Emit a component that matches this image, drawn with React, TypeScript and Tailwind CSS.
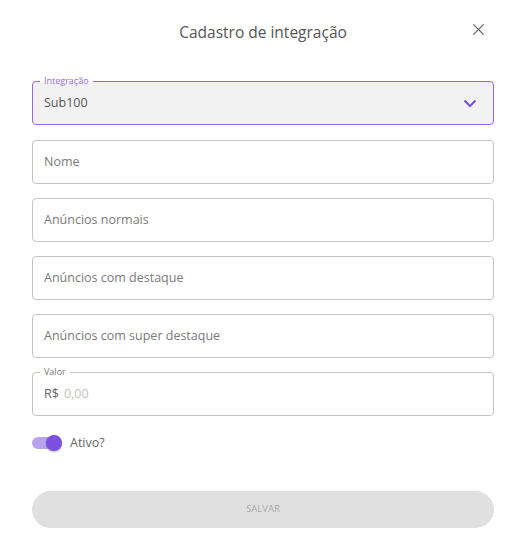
const font = { fontFamily: "'Open Sans', 'Noto Sans', sans-serif" };

function OutlinedField({ label, children, focused = false }: { label: string; children: React.ReactNode; focused?: boolean }) {
  return (
    <div
      className={`relative h-[44px] rounded-[4px] border px-[11px] flex items-center ${
        focused ? "border-[#9466ee] bg-[#f2f2f2]" : "border-[#c4c4c4] bg-white"
      }`}
    >
      <span
        className={`absolute left-[7px] top-[-6px] px-[4px] text-[9px] leading-[10px] ${
          focused ? "text-[#9466ee] bg-[linear-gradient(to_bottom,#fff_70%,#f2f2f2_70%)]" : "text-[#777] bg-white"
        }`}
      >
        {label}
      </span>
      {children}
    </div>
  );
}

function TextField({ placeholder }: { placeholder: string }) {
  return (
    <div className="h-[44px] rounded-[4px] border border-[#c4c4c4] px-[11px] flex items-center">
      <span className="text-[12.5px] text-[#7a7a7a]">{placeholder}</span>
    </div>
  );
}

export default function App() {
  return (
    <div className="w-[532px] h-[552px] bg-white text-[#555]" style={font}>
      <div className="relative flex justify-center pl-[32px] pr-[38px] pt-[21px] h-[81px]">
        <h2 className="text-[15.5px] leading-[22px] text-[#555]">Cadastro de integração</h2>
        <button className="absolute right-[47px] top-[23px] text-[#666]">
          <svg width="13" height="13" viewBox="0 0 14 14" fill="none" stroke="currentColor" strokeWidth="1.4">
            <path d="M1.5 1.5l11 11M12.5 1.5l-11 11" />
          </svg>
        </button>
      </div>

      <div className="pl-[32px] pr-[38px] flex flex-col">
        <OutlinedField label="Integração" focused>
          <div className="flex-1 flex items-center justify-between">
            <span className="text-[12.5px] text-[#555]">Sub100</span>
            <svg width="14" height="9" viewBox="0 0 14 9" fill="none" stroke="#7c4fdc" strokeWidth="2" className="mr-[5px]">
              <path d="M1.5 1.5l5.5 5.5 5.5-5.5" />
            </svg>
          </div>
        </OutlinedField>

        <div className="flex flex-col gap-[14px] mt-[15px]">
          <TextField placeholder="Nome" />
          <TextField placeholder="Anúncios normais" />
          <TextField placeholder="Anúncios com destaque" />
          <TextField placeholder="Anúncios com super destaque" />
          <OutlinedField label="Valor">
            <div className="flex items-center gap-[5px] text-[12.5px]">
              <span className="text-[#666]">R$</span>
              <span className="text-[#c2c2c2]">0,00</span>
            </div>
          </OutlinedField>
        </div>

        <div className="flex items-center gap-[8px] mt-[18px]">
          <div className="relative w-[30px] h-[16px] flex items-center">
            <div className="w-[28px] h-[12px] rounded-full bg-[#b9a3ee]" />
            <div className="absolute right-0 top-0 w-[16px] h-[16px] rounded-full bg-[#7c4fdc] shadow-[0_1px_2px_rgba(0,0,0,0.3)]" />
          </div>
          <span className="text-[12.5px] text-[#666]">Ativo?</span>
        </div>

        <button className="mt-[38px] h-[37px] w-full rounded-full bg-[#e0e0e0] text-[9.5px] text-[#aaa]">
          SALVAR
        </button>
      </div>
    </div>
  );
}
